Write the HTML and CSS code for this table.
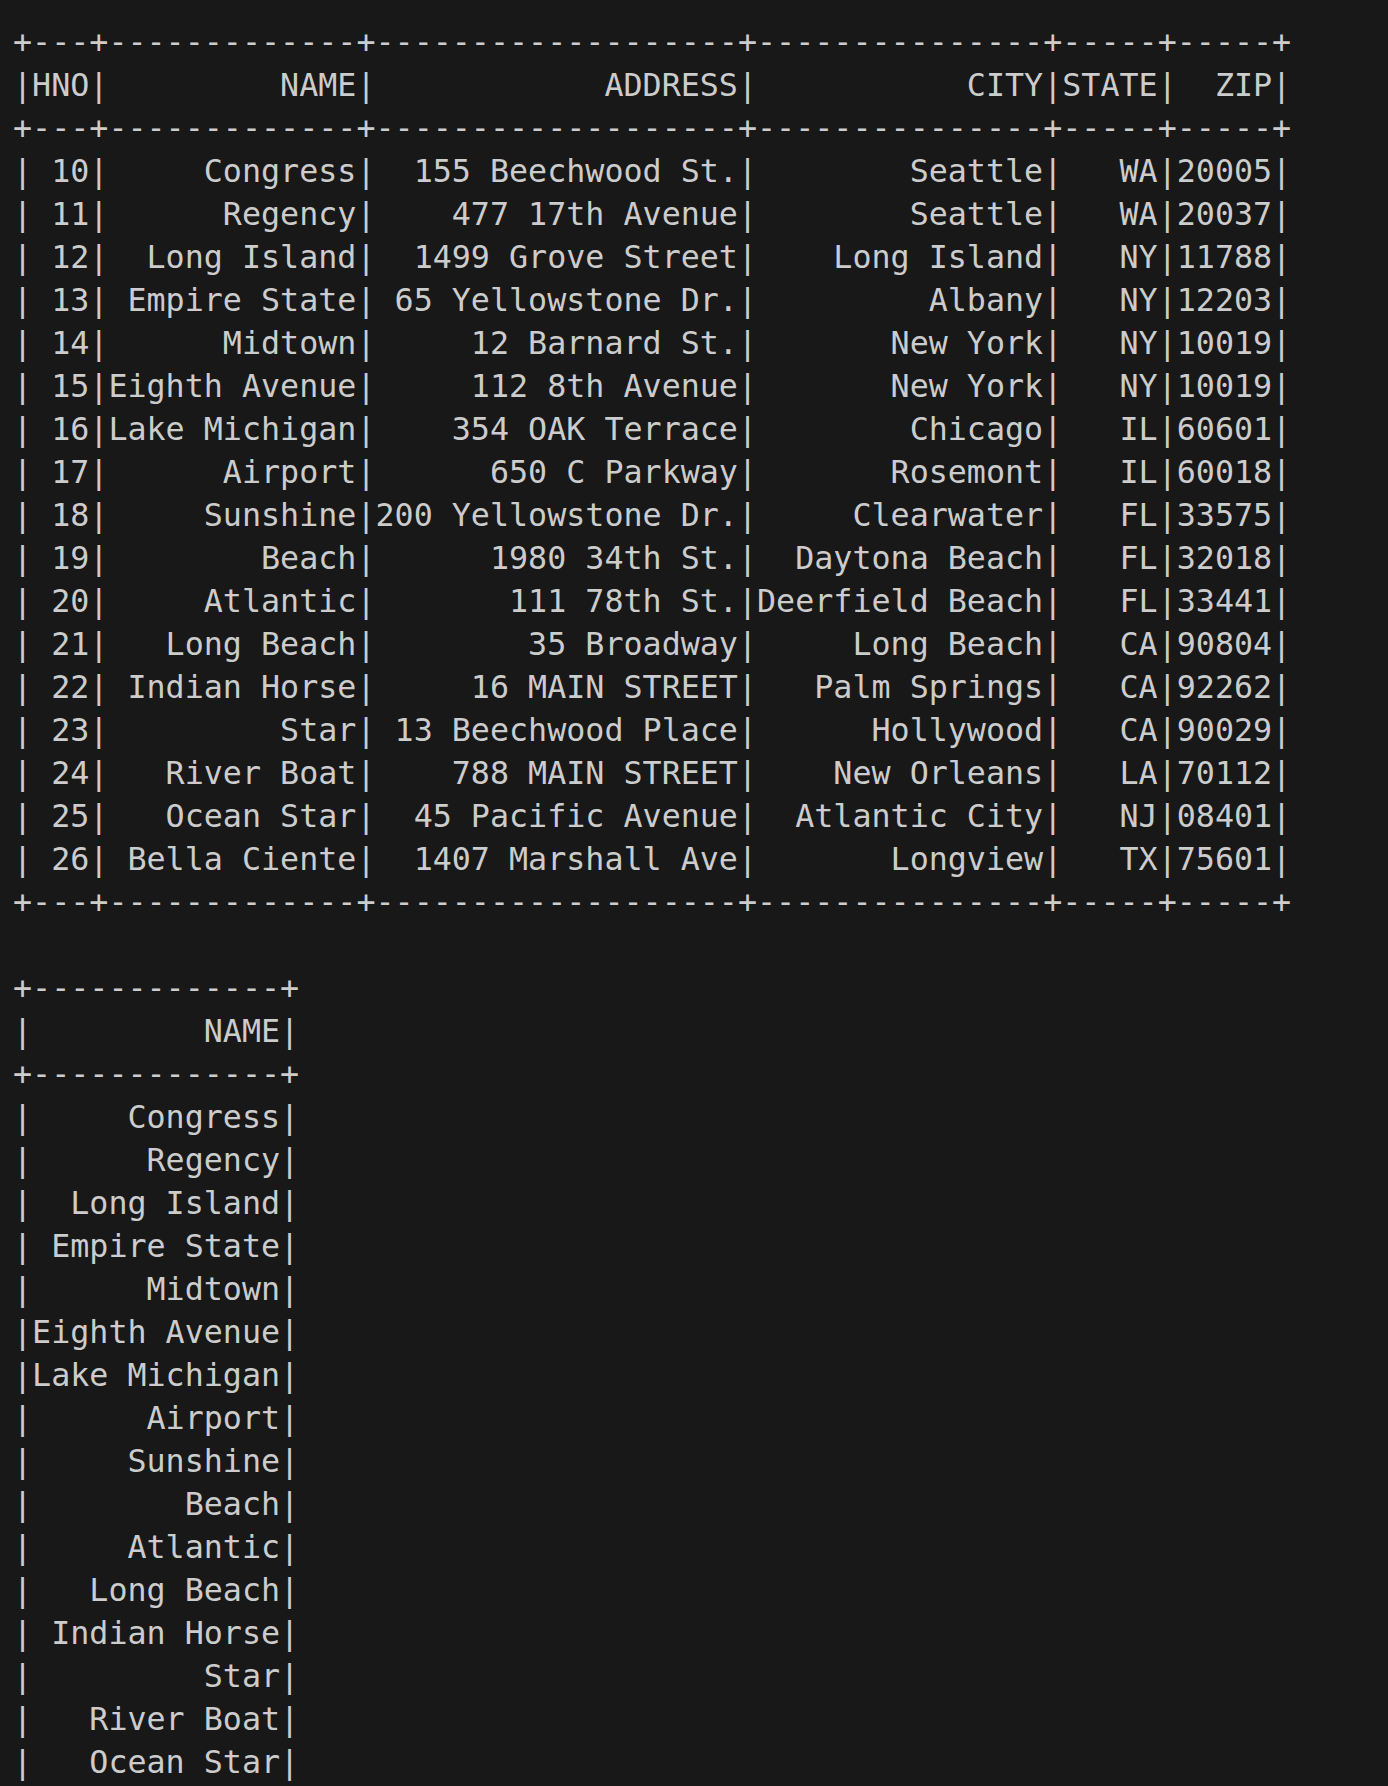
FILE: index.html
```html
<!DOCTYPE html>
<html lang="en">
<head>
  <meta charset="UTF-8" />
  <meta name="viewport" content="width=device-width, initial-scale=1.0"/>
  <title>Terminal – df.show()</title>
  <link rel="stylesheet" href="styles.css">
</head>
<body>

  <div class="terminal">
<pre class="output">+---+-------------+-------------------+---------------+-----+-----+
|HNO|         NAME|            ADDRESS|           CITY|STATE|  ZIP|
+---+-------------+-------------------+---------------+-----+-----+
| 10|     Congress|  155 Beechwood St.|        Seattle|   WA|20005|
| 11|      Regency|    477 17th Avenue|        Seattle|   WA|20037|
| 12|  Long Island|  1499 Grove Street|    Long Island|   NY|11788|
| 13| Empire State| 65 Yellowstone Dr.|         Albany|   NY|12203|
| 14|      Midtown|     12 Barnard St.|       New York|   NY|10019|
| 15|Eighth Avenue|     112 8th Avenue|       New York|   NY|10019|
| 16|Lake Michigan|    354 OAK Terrace|        Chicago|   IL|60601|
| 17|      Airport|      650 C Parkway|       Rosemont|   IL|60018|
| 18|     Sunshine|200 Yellowstone Dr.|     Clearwater|   FL|33575|
| 19|        Beach|      1980 34th St.|  Daytona Beach|   FL|32018|
| 20|     Atlantic|       111 78th St.|Deerfield Beach|   FL|33441|
| 21|   Long Beach|        35 Broadway|     Long Beach|   CA|90804|
| 22| Indian Horse|     16 MAIN STREET|   Palm Springs|   CA|92262|
| 23|         Star| 13 Beechwood Place|      Hollywood|   CA|90029|
| 24|   River Boat|    788 MAIN STREET|    New Orleans|   LA|70112|
| 25|   Ocean Star|  45 Pacific Avenue|  Atlantic City|   NJ|08401|
| 26| Bella Ciente|  1407 Marshall Ave|       Longview|   TX|75601|
+---+-------------+-------------------+---------------+-----+-----+

+-------------+
|         NAME|
+-------------+
|     Congress|
|      Regency|
|  Long Island|
| Empire State|
|      Midtown|
|Eighth Avenue|
|Lake Michigan|
|      Airport|
|     Sunshine|
|        Beach|
|     Atlantic|
|   Long Beach|
| Indian Horse|
|         Star|
|   River Boat|
|   Ocean Star|
</pre>
  </div>

</body>
</html>
```

FILE: styles.css
```css
* { box-sizing: border-box; margin: 0; padding: 0; }
body {
  background-color: #181818;
  color: #cccccc;
}
.terminal {
  padding: 21px 0 0 13px;
}
.output {
  font-family: 'DejaVu Sans Mono', monospace;
  font-size: 31.7px;
  line-height: 43px;
  white-space: pre;
}
```
